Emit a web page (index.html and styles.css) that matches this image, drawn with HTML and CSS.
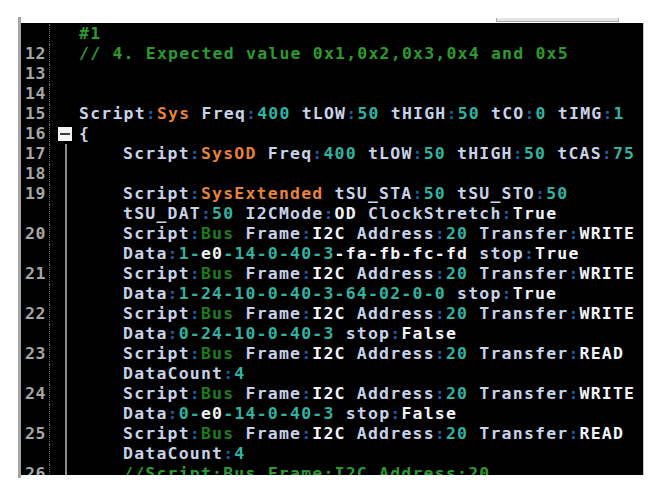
FILE: index.html
```html
<!DOCTYPE html>
<html>
<head>
<meta charset="utf-8">
<link rel="stylesheet" href="styles.css">
</head>
<body>
<div class="frame">
  <div class="topstrip"><span class="tab"></span></div>
  <div class="editor">
    <div class="row"><span class="num"></span><span class="fold"></span><span class="code"><span class="g">#1</span></span></div>
    <div class="row"><span class="num">12</span><span class="fold"></span><span class="code"><span class="g">// 4. Expected value 0x1,0x2,0x3,0x4 and 0x5</span></span></div>
    <div class="row"><span class="num">13</span><span class="fold"></span><span class="code"></span></div>
    <div class="row"><span class="num">14</span><span class="fold"></span><span class="code"></span></div>
    <div class="row"><span class="num">15</span><span class="fold"></span><span class="code">Script<i>:</i><span class="o">Sys</span> Freq<i>:</i><span class="n">400</span> tLOW<i>:</i><span class="n">50</span> tHIGH<i>:</i><span class="n">50</span> tCO<i>:</i><span class="n">0</span> tIMG<i>:</i><span class="n">1</span></span></div>
    <div class="row"><span class="num">16</span><span class="fold"><span class="box"></span></span><span class="code">{</span></div>
    <div class="row"><span class="num">17</span><span class="fold line"></span><span class="code in">Script<i>:</i><span class="o">SysOD</span> Freq<i>:</i><span class="n">400</span> tLOW<i>:</i><span class="n">50</span> tHIGH<i>:</i><span class="n">50</span> tCAS<i>:</i><span class="n">75</span></span></div>
    <div class="row"><span class="num">18</span><span class="fold line"></span><span class="code in"></span></div>
    <div class="row"><span class="num">19</span><span class="fold line"></span><span class="code in">Script<i>:</i><span class="o">SysExtended</span> tSU_STA<i>:</i><span class="n">50</span> tSU_STO<i>:</i><span class="n">50</span></span></div>
    <div class="row"><span class="num"></span><span class="fold line"></span><span class="code in">tSU_DAT<i>:</i><span class="n">50</span> I2CMode<i>:</i><span class="w">OD</span> ClockStretch<i>:</i><span class="w">True</span></span></div>
    <div class="row"><span class="num">20</span><span class="fold line"></span><span class="code in">Script<i>:</i><span class="b">Bus</span> Frame<i>:</i><span class="w">I2C</span> Address<i>:</i><span class="n">20</span> Transfer<i>:</i><span class="w">WRITE</span></span></div>
    <div class="row"><span class="num"></span><span class="fold line"></span><span class="code in">Data<i>:</i><span class="n">1-</span><span class="w">e0</span><span class="n">-14-0-40-3</span><span class="w">-fa-fb-fc-fd</span> stop<i>:</i><span class="w">True</span></span></div>
    <div class="row"><span class="num">21</span><span class="fold line"></span><span class="code in">Script<i>:</i><span class="b">Bus</span> Frame<i>:</i><span class="w">I2C</span> Address<i>:</i><span class="n">20</span> Transfer<i>:</i><span class="w">WRITE</span></span></div>
    <div class="row"><span class="num"></span><span class="fold line"></span><span class="code in">Data<i>:</i><span class="n">1-24-10-0-40-3-64-02-0-0</span> stop<i>:</i><span class="w">True</span></span></div>
    <div class="row"><span class="num">22</span><span class="fold line"></span><span class="code in">Script<i>:</i><span class="b">Bus</span> Frame<i>:</i><span class="w">I2C</span> Address<i>:</i><span class="n">20</span> Transfer<i>:</i><span class="w">WRITE</span></span></div>
    <div class="row"><span class="num"></span><span class="fold line"></span><span class="code in">Data<i>:</i><span class="n">0-24-10-0-40-3</span> stop<i>:</i><span class="w">False</span></span></div>
    <div class="row"><span class="num">23</span><span class="fold line"></span><span class="code in">Script<i>:</i><span class="b">Bus</span> Frame<i>:</i><span class="w">I2C</span> Address<i>:</i><span class="n">20</span> Transfer<i>:</i><span class="w">READ</span></span></div>
    <div class="row"><span class="num"></span><span class="fold line"></span><span class="code in">DataCount<i>:</i><span class="n">4</span></span></div>
    <div class="row"><span class="num">24</span><span class="fold line"></span><span class="code in">Script<i>:</i><span class="b">Bus</span> Frame<i>:</i><span class="w">I2C</span> Address<i>:</i><span class="n">20</span> Transfer<i>:</i><span class="w">WRITE</span></span></div>
    <div class="row"><span class="num"></span><span class="fold line"></span><span class="code in">Data<i>:</i><span class="n">0-</span><span class="w">e0</span><span class="n">-14-0-40-3</span> stop<i>:</i><span class="w">False</span></span></div>
    <div class="row"><span class="num">25</span><span class="fold line"></span><span class="code in">Script<i>:</i><span class="b">Bus</span> Frame<i>:</i><span class="w">I2C</span> Address<i>:</i><span class="n">20</span> Transfer<i>:</i><span class="w">READ</span></span></div>
    <div class="row"><span class="num"></span><span class="fold line"></span><span class="code in">DataCount<i>:</i><span class="n">4</span></span></div>
    <div class="row"><span class="num">26</span><span class="fold line"></span><span class="code in"><span class="g">//Script:Bus Frame:I2C Address:20</span></span></div>
  </div>
</div>
</body>
</html>
```

FILE: styles.css
```css
html, body {
  margin: 0;
  padding: 0;
  background: #ffffff;
}
.frame {
  margin: 17px 0 0 18px;
  width: 629px;
  height: 461px;
  border-left: 3px solid #a4a4a4;
  display: flex;
  flex-direction: column;
}
.topstrip {
  height: 6px;
  padding-left: 475px;
  display: flex;
  align-items: flex-start;
}
.tab {
  margin-top: 1px;
  width: 121px;
  height: 3px;
  border: 1px solid #a8a8a8;
  border-top: none;
  background: #e4e4e4;
}
.editor {
  width: 623px;
  height: 452px;
  background: #000000;
  border-right: 1px solid #c8c8c8;
  overflow: hidden;
  padding-top: 1px;
  box-sizing: border-box;
  font-family: "DejaVu Sans Mono", monospace;
  font-weight: bold;
  font-size: 16.5px;
  letter-spacing: 1.2px;
  color: #c8d2e8;
}
.row {
  display: flex;
  height: 20px;
  line-height: 20px;
  white-space: pre;
}
.num {
  width: 25px;
  padding-right: 3px;
  text-align: right;
  color: #a6a6a6;
  letter-spacing: 0.6px;
  border-right: 1px dotted #6a6a6a;
  flex: none;
}
.fold {
  width: 29px;
  flex: none;
  display: flex;
  align-items: center;
  padding-left: 8px;
  box-sizing: border-box;
}
.fold.line {
  background: linear-gradient(#8c8c8c, #8c8c8c) 15px 0 / 2px 100% no-repeat;
}
.box {
  width: 14px;
  height: 14px;
  background: #f4f4f4 linear-gradient(#3a3a3a, #3a3a3a) center / 10px 2px no-repeat;
}
.code {
  flex: 1;
}
.code.in {
  padding-left: 44px;
}
i { font-style: normal; color: #1f5ea8; }
.o { color: #e8823a; }
.n { color: #2fb3a2; }
.g { color: #2c9a2e; }
.b { color: #1c7d1c; }
.w { color: #f2f4f8; }
```
